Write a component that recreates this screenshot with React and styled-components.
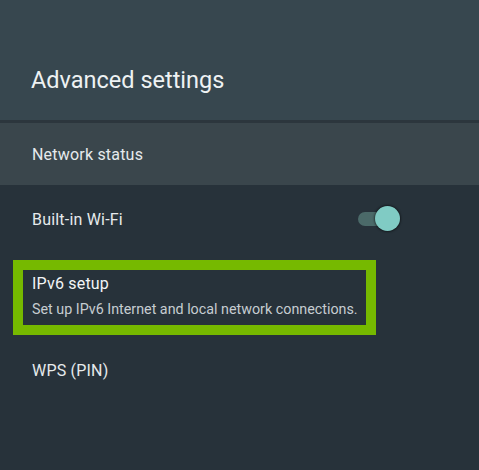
import React from "react";
import styled, { createGlobalStyle } from "styled-components";

const GlobalStyle = createGlobalStyle`
  html, body {
    margin: 0;
    padding: 0;
    background: #27323a;
  }
  body {
    font-family: Roboto, "Noto Sans", sans-serif;
  }
`;

const Screen = styled.div`
  width: 479px;
  height: 470px;
  display: flex;
  flex-direction: column;
  background: #27323a;
  overflow: hidden;
`;

const Header = styled.div`
  height: 123px;
  background: #37474f;
  display: flex;
  align-items: flex-end;
  padding: 0 0 26px 31px;
  box-sizing: border-box;
  border-bottom: 3px solid #2c363d;
`;

const Title = styled.h1`
  margin: 0;
  font-size: 23.5px;
  font-weight: 400;
  color: #eef2f3;
`;

const StatusRow = styled.div`
  height: 62px;
  background: #3a464c;
  display: flex;
  align-items: center;
  padding-left: 32px;
  font-size: 16px;
  letter-spacing: 0.2px;
  color: #e6eaec;
`;

const List = styled.div`
  display: flex;
  flex-direction: column;
  padding-top: 12px;
`;

const Row = styled.div`
  height: 44px;
  display: flex;
  align-items: center;
  justify-content: space-between;
  padding: 0 87px 0 32px;
  font-size: 16px;
  letter-spacing: 0.2px;
  color: #e6eaec;
`;

const Focused = styled.div`
  margin: 19px 0 0 13px;
  width: 363px;
  height: 75px;
  box-sizing: border-box;
  border: 10px solid #76b900;
  padding: 4px 0 0 9px;
  display: flex;
  flex-direction: column;
  gap: 8px;
`;

const ItemTitle = styled.div`
  font-size: 16px;
  letter-spacing: 0.2px;
  color: #f2f5f6;
`;

const ItemSub = styled.div`
  font-size: 14.3px;
  color: #c6cdd1;
  white-space: nowrap;
`;

const Track = styled.div`
  position: relative;
  width: 34px;
  height: 14px;
  border-radius: 7px;
  background: #4b6a69;
`;

const Thumb = styled.div`
  position: absolute;
  right: -8px;
  top: -6px;
  width: 25px;
  height: 25px;
  border-radius: 50%;
  background: #80cbc4;
  box-shadow: 0 0 2px 1px rgba(0, 0, 0, 0.45);
`;

const WpsRow = styled(Row)`
  margin-top: 13px;
`;

export default function App() {
  return (
    <Screen>
      <GlobalStyle />
      <Header>
        <Title>Advanced settings</Title>
      </Header>
      <StatusRow>Network status</StatusRow>
      <List>
        <Row>
          Built-in Wi-Fi
          <Track>
            <Thumb />
          </Track>
        </Row>
        <Focused>
          <ItemTitle>IPv6 setup</ItemTitle>
          <ItemSub>Set up IPv6 Internet and local network connections.</ItemSub>
        </Focused>
        <WpsRow>WPS (PIN)</WpsRow>
      </List>
    </Screen>
  );
}
